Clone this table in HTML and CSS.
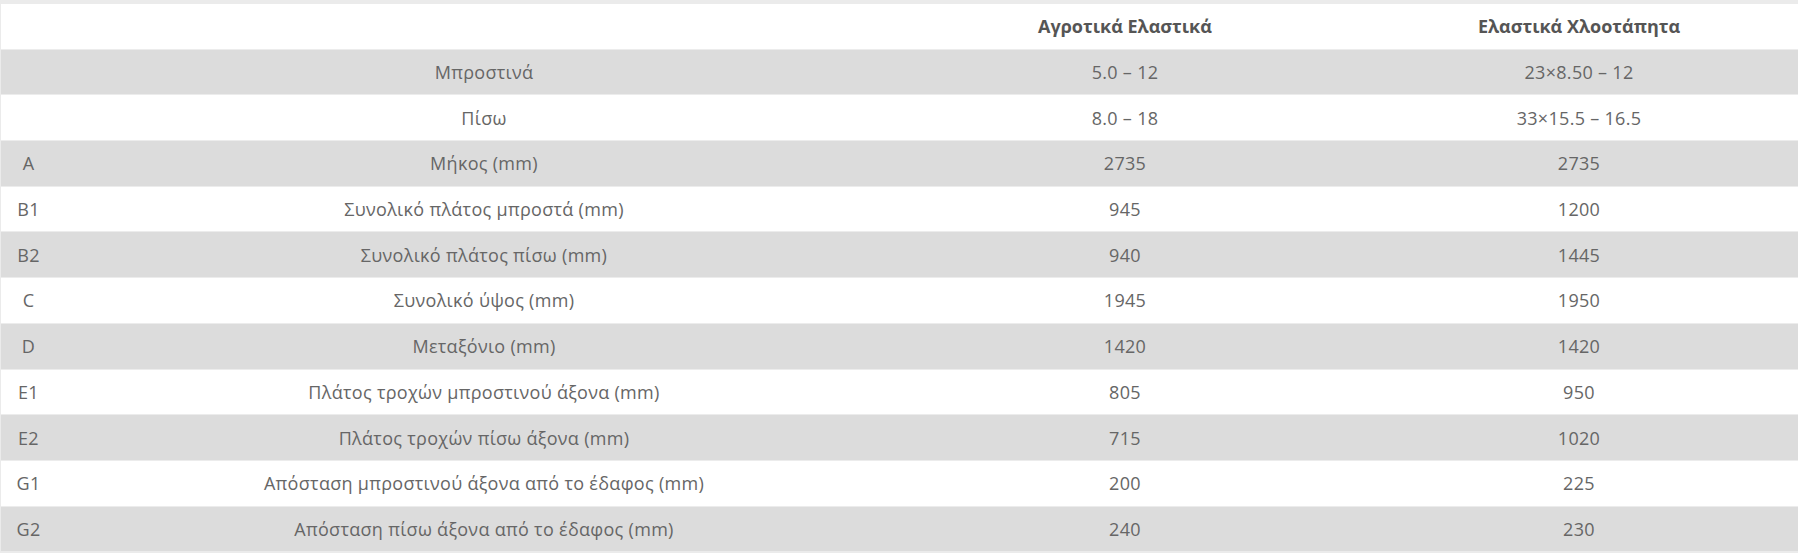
FILE: index.html
```html
<!DOCTYPE html>
<html lang="el">
<head>
<meta charset="utf-8">
<link rel="stylesheet" href="styles.css">
</head>
<body>
<div class="wrap">
<table class="spec">
<colgroup>
<col class="c1"><col class="c2"><col class="c3"><col class="c4">
</colgroup>
<thead>
<tr><th></th><th></th><th>Αγροτικά Ελαστικά</th><th>Ελαστικά Χλοοτάπητα</th></tr>
</thead>
<tbody>
<tr><td></td><td>Μπροστινά</td><td>5.0 – 12</td><td>23×8.50 – 12</td></tr>
<tr><td></td><td>Πίσω</td><td>8.0 – 18</td><td>33×15.5 – 16.5</td></tr>
<tr><td>A</td><td>Μήκος (mm)</td><td>2735</td><td>2735</td></tr>
<tr><td>B1</td><td>Συνολικό πλάτος μπροστά (mm)</td><td>945</td><td>1200</td></tr>
<tr><td>B2</td><td>Συνολικό πλάτος πίσω (mm)</td><td>940</td><td>1445</td></tr>
<tr><td>C</td><td>Συνολικό ύψος (mm)</td><td>1945</td><td>1950</td></tr>
<tr><td>D</td><td>Μεταξόνιο (mm)</td><td>1420</td><td>1420</td></tr>
<tr><td>E1</td><td>Πλάτος τροχών μπροστινού άξονα (mm)</td><td>805</td><td>950</td></tr>
<tr><td>E2</td><td>Πλάτος τροχών πίσω άξονα (mm)</td><td>715</td><td>1020</td></tr>
<tr><td>G1</td><td>Απόσταση μπροστινού άξονα από το έδαφος (mm)</td><td>200</td><td>225</td></tr>
<tr><td>G2</td><td>Απόσταση πίσω άξονα από το έδαφος (mm)</td><td>240</td><td>230</td></tr>
</tbody>
</table>
</div>
</body>
</html>
```

FILE: styles.css
```css
html, body {
  margin: 0;
  padding: 0;
  background: #ffffff;
}
body {
  overflow: hidden;
}
.wrap {
  width: 1819px;
}
.spec {
  width: 1819px;
  table-layout: fixed;
  border-collapse: separate;
  border-spacing: 0;
  border-top: 4px solid #ebebeb;
  border-left: 1px solid #ebebeb;
  border-bottom: 3px solid #ebebeb;
  font-family: "Open Sans", "Noto Sans", sans-serif;
  font-size: 18px;
  letter-spacing: 0.3px;
  color: #666666;
}
.c1 { width: 55px; }
.c2 { width: 856px; }
.c3 { width: 426px; }
.c4 { width: 482px; }
.spec th,
.spec td {
  height: 44.7px;
  padding: 0;
  text-align: center;
  vertical-align: middle;
  font-weight: 400;
}
.spec th {
  font-weight: 700;
  color: #555555;
  letter-spacing: 0;
}
.spec td {
  border-top: 1px solid #ececec;
}
.spec tbody tr:nth-child(odd) td {
  background: #dcdcdc;
}
```
